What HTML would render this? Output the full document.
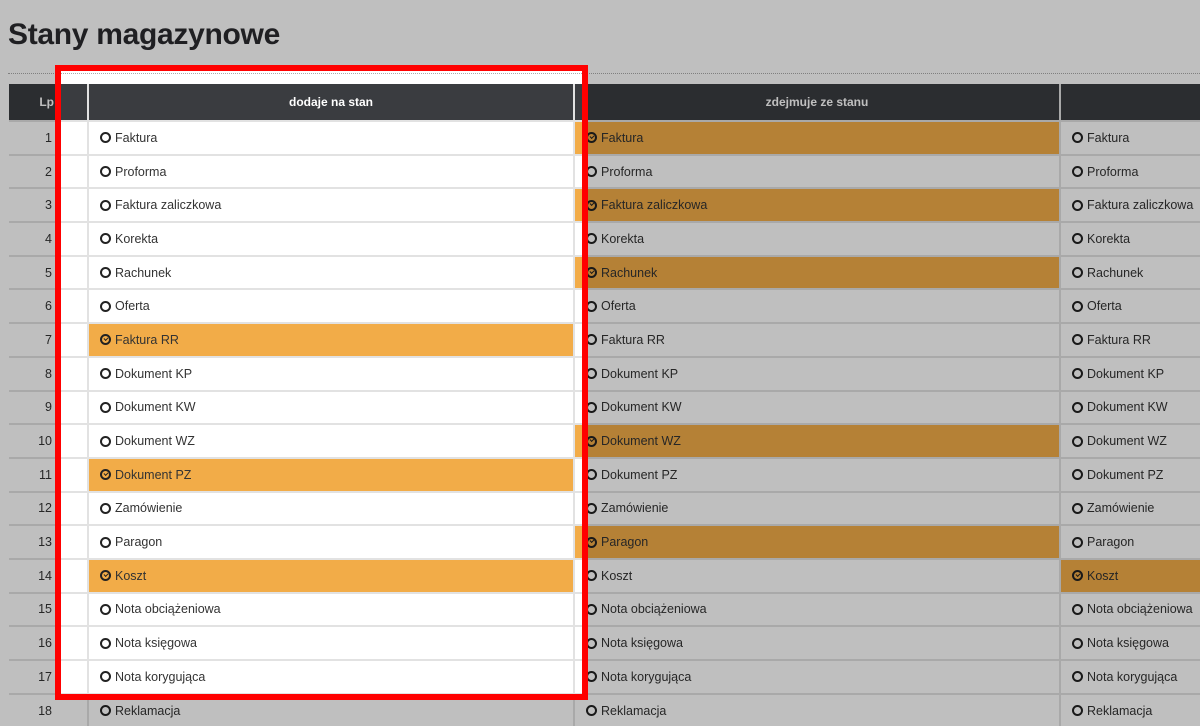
<!DOCTYPE html>
<html><head><meta charset="utf-8"><style>
*{margin:0;padding:0;box-sizing:border-box}
html,body{width:1200px;height:715px;overflow:hidden;background:#fff;font-family:"Liberation Sans",sans-serif}
h1{position:absolute;left:8px;top:18px;font-size:30px;font-weight:bold;color:#2a2a2e;letter-spacing:-0.3px}
.dot{position:absolute;left:8px;top:73px;width:1200px;border-top:1px dotted #aaa}
.grid{position:absolute;left:9px;top:84px;display:grid;grid-template-columns:78px 484px 484px 200px;grid-template-rows:36px repeat(18,31.7px);gap:2px;background:#e2e2e2}
.grid div{background:#fff;font-size:12.5px;color:#333;display:flex;align-items:center;padding-left:11px;white-space:nowrap}
.grid .h{background:#3a3c40;color:#fff;font-weight:bold;justify-content:center;padding:0;font-size:12px}
.grid .h.lp{justify-content:flex-end;padding-right:33px}
.grid .n{justify-content:flex-end;padding-right:35px;padding-left:0}
.grid .o{background:#f2ac48}
.grid div i{display:inline-block;width:11px;height:11px;border:2px solid #222;border-radius:50%;margin-right:4px;position:relative;flex:none}
.grid .o i::after{content:"";position:absolute;left:1.5px;top:0.5px;width:3px;height:2px;border-left:1.5px solid #222;border-bottom:1.5px solid #222;transform:rotate(-45deg)}
.box{position:absolute;left:55px;top:65px;width:533px;height:635px;border:6px solid #f00;box-shadow:0 0 0 2000px rgba(0,0,0,0.25)}
</style></head><body>
<h1>Stany magazynowe</h1>
<div class="dot"></div>
<div class="grid">
<div class="h lp">Lp</div><div class="h">dodaje na stan</div><div class="h">zdejmuje ze stanu</div><div class="h"></div>
<div class="n">1</div><div><i></i>Faktura</div><div class="o"><i></i>Faktura</div><div><i></i>Faktura</div>
<div class="n">2</div><div><i></i>Proforma</div><div><i></i>Proforma</div><div><i></i>Proforma</div>
<div class="n">3</div><div><i></i>Faktura zaliczkowa</div><div class="o"><i></i>Faktura zaliczkowa</div><div><i></i>Faktura zaliczkowa</div>
<div class="n">4</div><div><i></i>Korekta</div><div><i></i>Korekta</div><div><i></i>Korekta</div>
<div class="n">5</div><div><i></i>Rachunek</div><div class="o"><i></i>Rachunek</div><div><i></i>Rachunek</div>
<div class="n">6</div><div><i></i>Oferta</div><div><i></i>Oferta</div><div><i></i>Oferta</div>
<div class="n">7</div><div class="o"><i></i>Faktura RR</div><div><i></i>Faktura RR</div><div><i></i>Faktura RR</div>
<div class="n">8</div><div><i></i>Dokument KP</div><div><i></i>Dokument KP</div><div><i></i>Dokument KP</div>
<div class="n">9</div><div><i></i>Dokument KW</div><div><i></i>Dokument KW</div><div><i></i>Dokument KW</div>
<div class="n">10</div><div><i></i>Dokument WZ</div><div class="o"><i></i>Dokument WZ</div><div><i></i>Dokument WZ</div>
<div class="n">11</div><div class="o"><i></i>Dokument PZ</div><div><i></i>Dokument PZ</div><div><i></i>Dokument PZ</div>
<div class="n">12</div><div><i></i>Zamówienie</div><div><i></i>Zamówienie</div><div><i></i>Zamówienie</div>
<div class="n">13</div><div><i></i>Paragon</div><div class="o"><i></i>Paragon</div><div><i></i>Paragon</div>
<div class="n">14</div><div class="o"><i></i>Koszt</div><div><i></i>Koszt</div><div class="o"><i></i>Koszt</div>
<div class="n">15</div><div><i></i>Nota obciążeniowa</div><div><i></i>Nota obciążeniowa</div><div><i></i>Nota obciążeniowa</div>
<div class="n">16</div><div><i></i>Nota księgowa</div><div><i></i>Nota księgowa</div><div><i></i>Nota księgowa</div>
<div class="n">17</div><div><i></i>Nota korygująca</div><div><i></i>Nota korygująca</div><div><i></i>Nota korygująca</div>
<div class="n">18</div><div><i></i>Reklamacja</div><div><i></i>Reklamacja</div><div><i></i>Reklamacja</div>
</div>
<div class="box"></div>
</body></html>
